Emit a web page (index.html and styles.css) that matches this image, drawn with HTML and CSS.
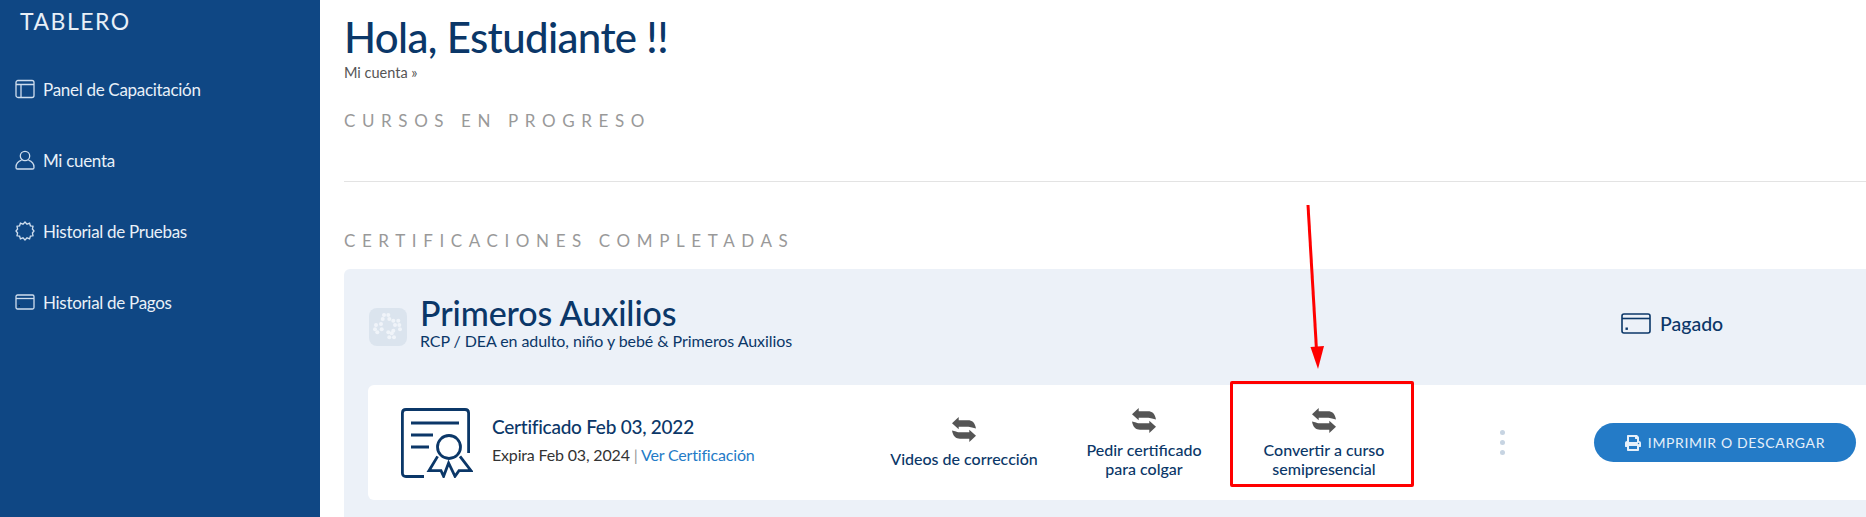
FILE: index.html
```html
<!DOCTYPE html>
<html lang="es">
<head>
  <meta charset="UTF-8" />
  <title>Tablero</title>
  <link rel="stylesheet" href="styles.css">
</head>
<body>
  <svg width="0" height="0" class="defs">
    <symbol id="swap" viewBox="0 0 24 25">
      <path d="M0 6.3L6.7 0V3.3H16C20 3.3 23 5.5 24 11.5L20 10.5C18.5 9.8 17 9.7 15 9.7H6.7V12.3Z"/>
      <path d="M24 18.7L17.3 25V21.7H8C4 21.7 1 19.5 0 13.5L4 14.5C5.5 15.2 7 15.3 9 15.3H17.3V12.7Z"/>
    </symbol>
    <symbol id="card" viewBox="0 0 30 21">
      <rect x="1" y="1" width="28" height="19" rx="2" fill="none" stroke="currentColor" stroke-width="1.6"/>
      <path d="M1 5.5H29" fill="none" stroke="currentColor" stroke-width="1.6"/>
    </symbol>
  </svg>

  <aside class="sidebar">
    <div class="side-title">TABLERO</div>
    <nav class="side-nav">
      <a href="#">
        <svg class="side-icon" viewBox="0 0 20 20"><rect x="1" y="1.5" width="18" height="17" rx="2"/><path d="M1 5.5H19M6 5.5V18.5"/></svg>
        Panel de Capacitación
      </a>
      <a href="#">
        <svg class="side-icon" viewBox="0 0 20 20"><circle cx="10" cy="6" r="4.7"/><path d="M6.6 10.2C3.4 11.2 1 14 1 17.4C1 18.4 1.5 19 2.5 19H17.5C18.5 19 19 18.4 19 17.4C19 14 16.6 11.2 13.4 10.2"/></svg>
        Mi cuenta
      </a>
      <a href="#">
        <svg class="side-icon" viewBox="0 0 20 20"><path d="M10 1L12 3.2L14.6 2.2L15.4 4.8L18 5.2L17.4 8L19 10L17.4 12L18 14.8L15.4 15.2L14.6 17.8L12 16.8L10 19L8 16.8L5.4 17.8L4.6 15.2L2 14.8L2.6 12L1 10L2.6 8L2 5.2L4.6 4.8L5.4 2.2L8 3.2Z"/></svg>
        Historial de Pruebas
      </a>
      <a href="#">
        <svg class="side-icon" viewBox="0 0 20 20"><rect x="1" y="3" width="18" height="14" rx="1.5"/><path d="M1 6.5H19"/><rect class="side-dot" x="3.5" y="13" width="1.4" height="1.4"/></svg>
        Historial de Pagos
      </a>
    </nav>
  </aside>

  <main class="main">
    <h1 class="greeting">Hola, Estudiante !!</h1>
    <div class="crumb">Mi cuenta »</div>
    <h2 class="section-title progress-title">CURSOS EN PROGRESO</h2>
    <hr class="divider">
    <h2 class="section-title done-title">CERTIFICACIONES COMPLETADAS</h2>

    <section class="course">
      <div class="course-head">
        <svg class="course-logo" viewBox="0 0 38 38">
          <rect width="38" height="38" rx="8" fill="#dbe4ee"/>
          <g fill="#f0f4f9">
            <circle cx="15" cy="7" r="2"/><circle cx="19.3" cy="7" r="2"/><circle cx="13.7" cy="11" r="2"/><circle cx="20.3" cy="11" r="2"/>
            <circle cx="24.3" cy="12.7" r="2"/><circle cx="29.3" cy="12.7" r="2"/><circle cx="26" cy="17" r="2"/><circle cx="30.3" cy="17" r="2"/>
            <circle cx="31" cy="21.3" r="2"/><circle cx="12" cy="16" r="2"/><circle cx="7" cy="17" r="2"/><circle cx="6" cy="21.3" r="2"/>
            <circle cx="8.3" cy="24.3" r="2"/><circle cx="12.7" cy="21.3" r="2"/><circle cx="24.3" cy="22.7" r="2"/><circle cx="19.3" cy="24.3" r="2"/>
            <circle cx="22.7" cy="25.3" r="2"/><circle cx="20.3" cy="29.3" r="2"/><circle cx="25" cy="29.3" r="2"/>
          </g>
        </svg>
        <div class="course-name">
          <div class="course-title">Primeros Auxilios</div>
          <div class="course-sub">RCP / DEA en adulto, niño y bebé &amp; Primeros Auxilios</div>
        </div>
        <div class="paid">
          <svg class="paid-icon" viewBox="0 0 30 21">
            <use href="#card"/>
            <rect x="4.5" y="14.5" width="2.4" height="2.4" fill="currentColor"/>
          </svg>
          Pagado
        </div>
      </div>

      <div class="cert-row">
        <svg class="cert-icon" viewBox="0 0 72 70">
          <path d="M23 68.5H5C2.5 68.5 1.4 67.2 1.4 65V5C1.4 2.8 2.5 1.5 5 1.5H64C66.5 1.5 67.6 2.8 67.6 5V45"/>
          <path d="M10 15H58M10 27H32M10 39H28"/>
          <circle cx="48" cy="39" r="11.5"/>
          <path d="M36.6 48.4L28 62.7H40L42.6 68.3L47.6 55L54 68.3L58 62.7H70L59 48.4"/>
        </svg>
        <div class="cert-info">
          <div class="cert-title">Certificado Feb 03, 2022</div>
          <div class="cert-sub">Expira Feb 03, 2024 <span class="sep">|</span> <a href="#">Ver Certificación</a></div>
        </div>
        <a class="action" href="#">
          <svg class="swap"><use href="#swap"/></svg>
          Videos de corrección
        </a>
        <a class="action" href="#">
          <svg class="swap"><use href="#swap"/></svg>
          Pedir certificado<br>para colgar
        </a>
        <a class="action" href="#">
          <svg class="swap"><use href="#swap"/></svg>
          Convertir a curso<br>semipresencial
        </a>
        <div class="dots"><i></i><i></i><i></i></div>
        <a class="print-btn" href="#">
          <svg class="print-icon" viewBox="0 0 512 512"><path fill="currentColor" d="M448 192V77.25c0-8.49-3.37-16.62-9.37-22.63L393.37 9.37c-6-6-14.14-9.37-22.63-9.37H96C78.33 0 64 14.33 64 32v160c-35.35 0-64 28.65-64 64v112c0 8.84 7.16 16 16 16h48v96c0 17.67 14.33 32 32 32h320c17.67 0 32-14.33 32-32v-96h48c8.84 0 16-7.16 16-16V256c0-35.35-28.65-64-64-64zm-64 256H128v-96h256v96zm0-224H128V64h192v48c0 8.84 7.16 16 16 16h48v96zm48 72c-13.25 0-24-10.75-24-24 0-13.26 10.75-24 24-24s24 10.74 24 24c0 13.25-10.75 24-24 24z"/></svg>
          IMPRIMIR O DESCARGAR
        </a>
      </div>
    </section>
  </main>

  <!-- annotation drawn over the screenshot -->
  <div class="note-box"></div>
  <svg class="note-arrow" viewBox="0 0 40 180">
    <path d="M10 5L18.5 150" stroke="#f00" stroke-width="3" fill="none"/>
    <path d="M12.5 147L26 146L20 169Z" fill="#f00"/>
  </svg>
</body>
</html>
```
FILE: styles.css
```css
html, body {
  margin: 0;
  padding: 0;
  width: 100%;
  height: 100%;
  overflow: hidden;
  background: #fff;
}

body {
  display: flex;
  font-family: 'Lato', sans-serif;
  color: #0b3768;
}

.defs {
  position: absolute;
}

/* Sidebar */
.sidebar {
  flex: 0 0 320px;
  height: 100%;
  background: #0f4784;
  color: #e8f0f8;
}

.side-title {
  margin: 7px 0 0 20px;
  font-size: 23px;
  line-height: 28px;
  letter-spacing: 1.5px;
  font-weight: 400;
}

.side-nav {
  display: flex;
  flex-direction: column;
  gap: 47px;
  margin: 42px 0 0 15px;
}

.side-nav a {
  display: flex;
  align-items: center;
  gap: 8px;
  height: 24px;
  color: #e8f0f8;
  text-decoration: none;
  font-size: 17px;
  letter-spacing: -0.3px;
}

.side-icon {
  width: 20px;
  height: 20px;
  fill: none;
  stroke: #cfdeee;
  stroke-width: 1.3;
}

.side-icon .side-dot {
  fill: #0b2238;
  stroke: none;
}

/* Main column */
.main {
  flex: 1;
  min-width: 0;
  padding: 0 0 0 24px;
}

.greeting {
  margin: 12px 0 0;
  font-size: 42px;
  line-height: 50px;
  font-weight: 500;
  letter-spacing: -0.65px;
  color: #0b3768;
}

.crumb {
  margin-top: 2px;
  font-size: 14.5px;
  line-height: 18px;
  color: #555;
}

.section-title {
  margin: 0;
  font-size: 17px;
  line-height: 20px;
  font-weight: 400;
  letter-spacing: 6.6px;
  color: #999;
}

.progress-title {
  margin-top: 29px;
}

.divider {
  margin: 50px 0 0;
  border: 0;
  border-top: 1px solid #e3e3e3;
}

.done-title {
  margin-top: 49px;
}

/* Course card */
.course {
  margin-top: 18px;
  padding: 0 0 40px 24px;
  background: #ecf1f8;
  border-radius: 6px 0 0 6px;
}

.course-head {
  display: flex;
  align-items: center;
  height: 116px;
}

.course-logo {
  width: 38px;
  height: 38px;
  margin: 0 13px 0 1px;
}

.course-name {
  padding-bottom: 8px;
}

.course-title {
  font-size: 34px;
  line-height: 36px;
  font-weight: 500;
  letter-spacing: -0.1px;
}

.course-sub {
  font-size: 16px;
  line-height: 20px;
  letter-spacing: -0.08px;
}

.paid {
  display: flex;
  align-items: center;
  gap: 9px;
  margin-left: 829px;
  padding-bottom: 7px;
  font-size: 19.5px;
  font-weight: 500;
}

.paid-icon {
  width: 30px;
  height: 21px;
}

.cert-row {
  display: flex;
  align-items: center;
  height: 115px;
  background: #fff;
  border-radius: 6px 0 0 6px;
}

.cert-icon {
  flex: none;
  width: 72px;
  height: 70px;
  margin: 0 19px 0 33px;
  fill: none;
  stroke: #0b3768;
  stroke-width: 2.8;
}

.cert-info {
  width: 382px;
  padding-bottom: 7px;
}

.cert-title {
  font-size: 19px;
  line-height: 26px;
  font-weight: 500;
  letter-spacing: -0.25px;
}

.cert-sub {
  margin-top: 5px;
  font-size: 16px;
  line-height: 20px;
  letter-spacing: -0.17px;
  color: #333;
}

.cert-sub .sep {
  color: #999;
}

.cert-sub a {
  color: #247bc7;
  text-decoration: none;
}

.action {
  flex: none;
  display: flex;
  flex-direction: column;
  align-items: center;
  width: 180px;
  color: #0b3768;
  text-decoration: none;
  text-align: center;
  font-size: 16px;
  line-height: 19px;
  font-weight: 500;
}

.swap {
  width: 24px;
  height: 25px;
  margin-bottom: 7px;
  fill: #555;
}

.dots {
  flex: none;
  display: flex;
  flex-direction: column;
  gap: 5px;
  margin-left: 86px;
}

.dots i {
  width: 5px;
  height: 5px;
  border-radius: 50%;
  background: #c7d4e2;
}

.print-btn {
  flex: none;
  display: flex;
  align-items: center;
  justify-content: center;
  gap: 7px;
  width: 262px;
  height: 39px;
  margin-left: 89px;
  border-radius: 20px;
  background: #247bc7;
  color: #e6f0fa;
  text-decoration: none;
  font-size: 14px;
  letter-spacing: 0.65px;
}

.print-icon {
  width: 16px;
  height: 16px;
}

/* Red annotation */
.note-box {
  position: absolute;
  left: 1230px;
  top: 381px;
  width: 178px;
  height: 100px;
  border: 3px solid #f00;
  border-radius: 2px;
}

.note-arrow {
  position: absolute;
  left: 1298px;
  top: 200px;
  width: 40px;
  height: 180px;
}
```
